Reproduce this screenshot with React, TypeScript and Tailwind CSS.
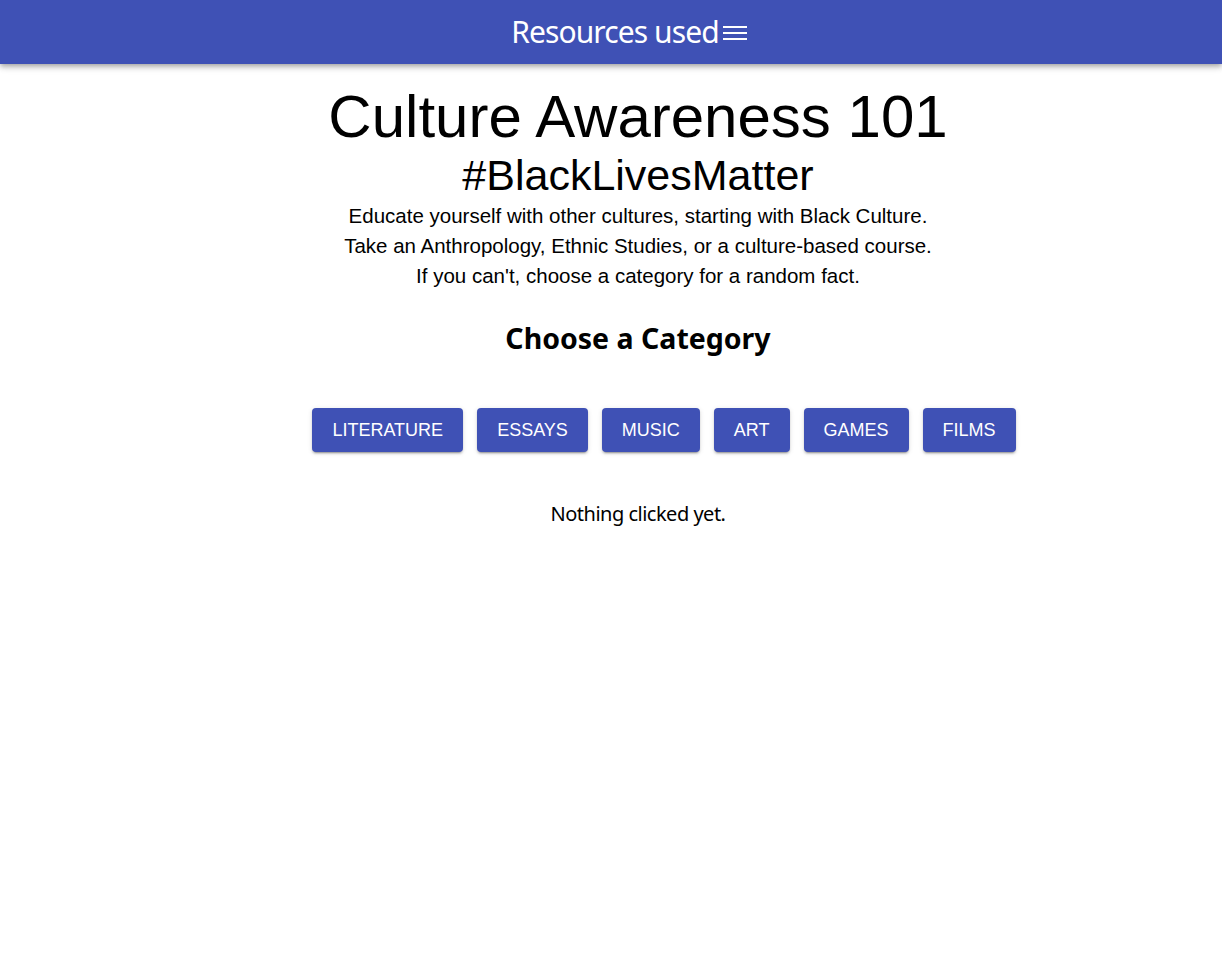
import React, { useState } from "react";

const categories = ["Literature", "Essays", "Music", "Art", "Games", "Films"];

const MenuIcon: React.FC = () => (
  <svg width="24" height="14" viewBox="0 0 24 14" fill="white" className="ml-[4px] mt-[1px]">
    <rect x="0" y="0" width="24" height="2" />
    <rect x="0" y="6" width="24" height="2" />
    <rect x="0" y="12" width="24" height="2" />
  </svg>
);

const App: React.FC = () => {
  const [picked, setPicked] = useState<string | null>(null);

  return (
    <div className="min-h-[970px] bg-white">
      <header className="h-16 bg-[#3f51b5] shadow-[0_2px_4px_-1px_rgba(0,0,0,0.2),0_4px_5px_0_rgba(0,0,0,0.14),0_1px_10px_0_rgba(0,0,0,0.12)] flex items-center justify-center pl-[36px]">
        <span className="text-white text-[30px] leading-none font-['Noto_Sans',sans-serif] tracking-[-0.9px]">
          Resources used
        </span>
        <MenuIcon />
      </header>

      <main className="flex flex-col items-center pl-[54px] text-black">
        <h1 className="mt-[23px] text-[60px] leading-[60px] font-['Liberation_Sans',Arial,sans-serif]">
          Culture Awareness 101
        </h1>
        <h2 className="mt-[6px] text-[43px] leading-[44px] font-['Liberation_Sans',Arial,sans-serif]">
          #BlackLivesMatter
        </h2>
        <div className="mt-[4px] text-[20.5px] leading-[30px] text-center font-['Liberation_Sans',Arial,sans-serif]">
          <p>Educate yourself with other cultures, starting with Black Culture.</p>
          <p>Take an Anthropology, Ethnic Studies, or a culture-based course.</p>
          <p>If you can't, choose a category for a random fact.</p>
        </div>

        <h3 className="mt-[27px] text-[28.5px] leading-[40px] font-bold font-['Noto_Sans',sans-serif]">
          Choose a Category
        </h3>

        <div className="mt-[50px] flex gap-[14px] pl-[52px]">
          {categories.map((c) => (
            <button
              key={c}
              onClick={() => setPicked(c)}
              className="h-[44px] px-[20px] rounded-[4px] bg-[#3f51b5] text-white uppercase text-[18px] font-['Liberation_Sans',Arial,sans-serif] shadow-[0_3px_1px_-2px_rgba(0,0,0,0.2),0_2px_2px_0_rgba(0,0,0,0.14),0_1px_5px_0_rgba(0,0,0,0.12)]"
            >
              {c}
            </button>
          ))}
        </div>

        <p className="mt-[48px] text-[20px] leading-[28px] font-['Noto_Sans',sans-serif] tracking-[-0.5px]">
          {picked ? `You picked ${picked}.` : "Nothing clicked yet."}
        </p>
      </main>
    </div>
  );
};

export default App;
